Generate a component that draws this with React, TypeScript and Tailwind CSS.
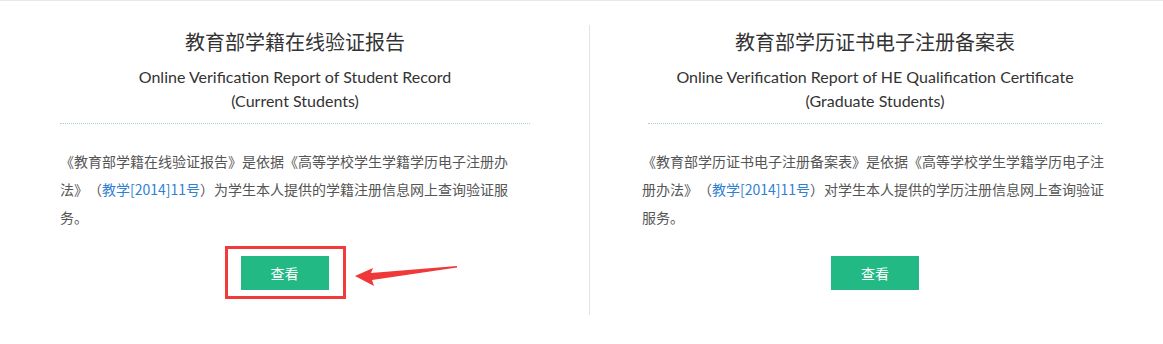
import React from 'react';

const FONT = '"Noto Sans CJK SC", sans-serif';
const EN_FONT = 'Lato, "Noto Sans CJK SC", sans-serif';

type Report = {
    id: string;
    title: string;
    en: string[];
    name: string;
    rest: string;
};

const REPORTS: Report[] = [
    {
        id: 'xj',
        title: '教育部学籍在线验证报告',
        en: ['Online Verification Report of Student Record', '(Current Students)'],
        name: '《教育部学籍在线验证报告》是依据《高等学校学生学籍学历电子注册办法》（',
        rest: '）为学生本人提供的学籍注册信息网上查询验证服务。',
    },
    {
        id: 'xl',
        title: '教育部学历证书电子注册备案表',
        en: ['Online Verification Report of HE Qualification Certificate', '(Graduate Students)'],
        name: '《教育部学历证书电子注册备案表》是依据《高等学校学生学籍学历电子注册办法》（',
        rest: '）对学生本人提供的学历注册信息网上查询验证服务。',
    },
];

const ViewButton: React.FC = () => (
    <button className="w-[88px] h-[34px] bg-[#23b984] text-white text-[14px] leading-[34px] text-center">
        查看
    </button>
);

const Arrow: React.FC = () => (
    <svg className="absolute left-[350px] top-[259px]" width="112" height="30" viewBox="0 0 112 30">
        <polygon points="5,16 23,8 21,13 107,6 107,7.5 22,20 24,26" fill="#f03838" />
    </svg>
);

const ReportColumn: React.FC<{ report: Report; highlight?: boolean; className: string; lineClass: string }> = ({
    report,
    highlight,
    className,
    lineClass,
}) => (
    <div className={className}>
        <h2 className="mt-[2px] text-center text-[20px] leading-[30px] text-[#333]">{report.title}</h2>
        <div className="mt-[8px] text-center text-[16px] leading-[24px] text-[#333]" style={{ fontFamily: EN_FONT }}>
            {report.en.map(line => (
                <p key={line}>{line}</p>
            ))}
        </div>
        <div className={`mt-[10px] border-t border-dotted border-[#a6d3c8] ${lineClass}`} />
        <p className="mt-[23px] text-[14px] leading-[28px] text-[#555] [text-spacing-trim:space-all]">
            {report.name}
            <span className="text-[#2f7fd4]">教学[2014]11号</span>
            {report.rest}
        </p>
        {highlight ? (
            <div className="mt-[15px] flex justify-center pr-[20px]">
                <div className="border-[3px] border-[#f23a3a] pl-[13px] pr-[14px] pt-[7px] pb-[6px]">
                    <ViewButton />
                </div>
            </div>
        ) : (
            <div className="mt-[25px] flex justify-center">
                <ViewButton />
            </div>
        )}
    </div>
);

const App: React.FC = () => {
    return (
        <div
            lang="zh-CN"
            className="relative w-[1163px] h-[344px] bg-white border-t border-[#e4eaea]"
            style={{ fontFamily: FONT }}
        >
            <div className="mt-[24px] flex h-[290px]">
                <ReportColumn
                    report={REPORTS[0]}
                    highlight
                    className="w-[589px] shrink-0 pl-[60px] pr-[59px]"
                    lineClass=""
                />
                <ReportColumn
                    report={REPORTS[1]}
                    className="w-[574px] shrink-0 border-l border-[#e3e3e3] pl-[52px] pr-[55px]"
                    lineClass="mx-[6px]"
                />
            </div>
            <Arrow />
        </div>
    );
};

export default App;
